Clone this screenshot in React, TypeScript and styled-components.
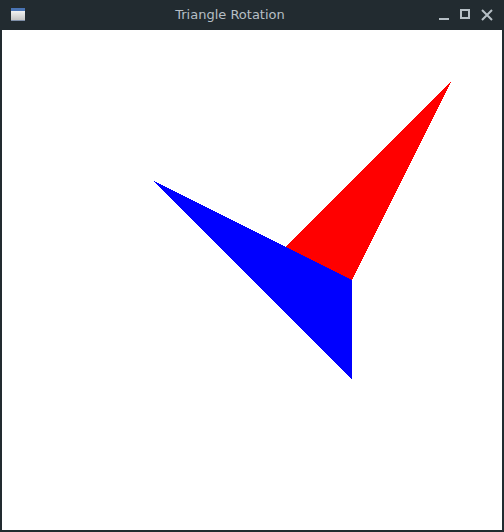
import React from "react";
import styled, { createGlobalStyle } from "styled-components";

const Global = createGlobalStyle`
  html, body { margin: 0; padding: 0; background: #222b30; }
  #root { width: 504px; height: 532px; }
`;

const Window = styled.div`
  width: 504px;
  height: 532px;
  box-sizing: border-box;
  background: #222b30;
  display: flex;
  flex-direction: column;
  padding: 0 2px 2px 2px;
`;

const TitleBar = styled.div`
  height: 30px;
  flex: none;
  display: grid;
  grid-template-columns: 40px 1fr 80px;
  align-items: center;
  margin: 0 -2px;
`;

const AppIcon = styled.div`
  width: 14px;
  height: 13px;
  margin-left: 11px;
  margin-top: -1px;
  box-sizing: border-box;
  border-top: 3px solid #4a74b4;
  background: linear-gradient(#f2f2f2, #c4c4c4);
  border-bottom: 1px solid #7f8fa8;
`;

const Title = styled.div`
  text-align: center;
  font-family: "DejaVu Sans", sans-serif;
  font-size: 13px;
  color: #b6bfc5;
  margin-left: -4px;
  margin-top: -1px;
`;

const Buttons = styled.div`
  display: flex;
  align-items: center;
  justify-content: flex-end;
  gap: 10px;
  padding-right: 11px;
`;

const Canvas = styled.div`
  flex: 1;
  background: #ffffff;
  overflow: hidden;
`;

export default function App() {
  return (
    <>
      <Global />
      <Window>
        <TitleBar>
          <AppIcon />
          <Title>Triangle Rotation</Title>
          <Buttons>
            <svg width="12" height="12" viewBox="0 0 12 12">
              <rect x="1" y="9" width="10" height="2" fill="#b6bfc5" />
            </svg>
            <svg width="11" height="12" viewBox="0 0 11 12">
              <rect x="1" y="1" width="8" height="8" fill="none" stroke="#b6bfc5" strokeWidth="2" />
            </svg>
            <svg width="12" height="12" viewBox="0 0 12 12">
              <path d="M1 1 L11 11 M11 1 L1 11" stroke="#b6bfc5" strokeWidth="2" />
            </svg>
          </Buttons>
        </TitleBar>
        <Canvas>
          <svg width="500" height="500" viewBox="2 30 500 500" shapeRendering="crispEdges">
            <polygon points="452,80 352,280 252,280" fill="#ff0000" />
            <polygon points="152,180 352,280 352,380" fill="#0000ff" />
          </svg>
        </Canvas>
      </Window>
    </>
  );
}
